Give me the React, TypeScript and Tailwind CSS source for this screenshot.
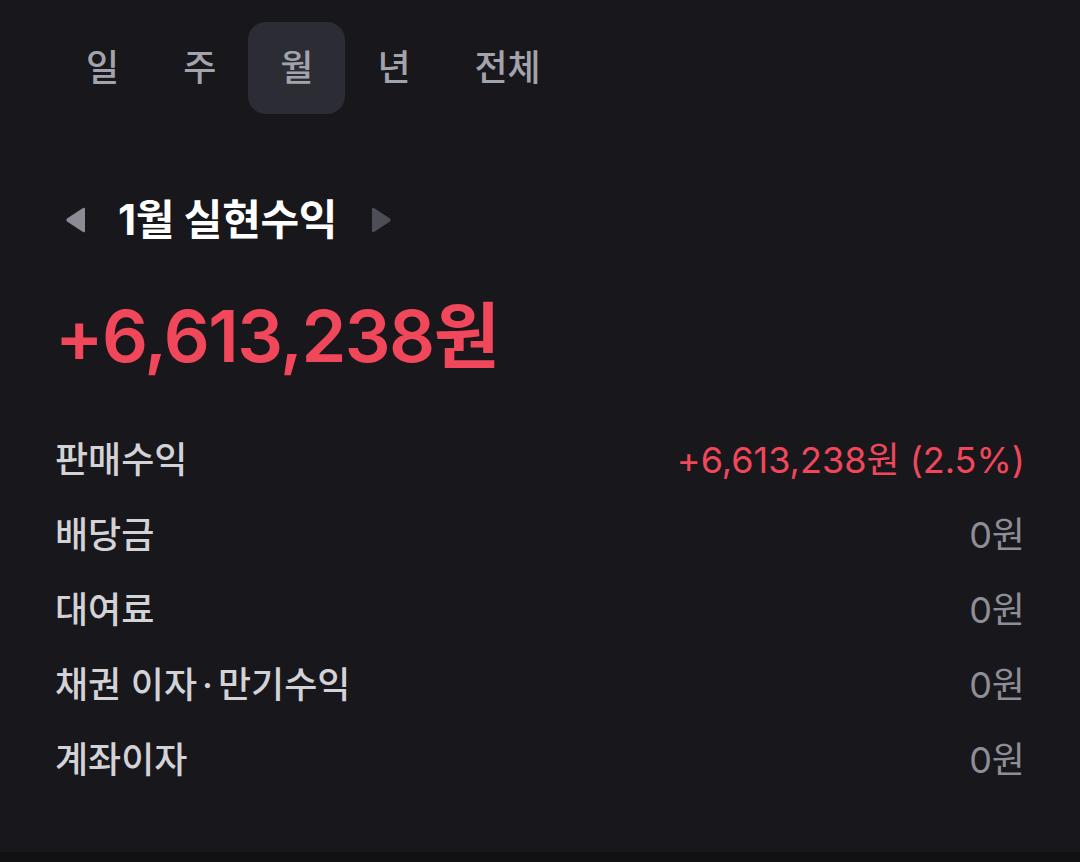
import React from "react";

const rows: { label: React.ReactNode; key: string; value: string; red?: boolean }[] = [
  { key: "a", label: "판매수익", value: "+6,613,238원 (2.5%)", red: true },
  { key: "b", label: "배당금", value: "0원" },
  { key: "c", label: "대여료", value: "0원" },
  {
    key: "d",
    label: (
      <>
        채권 이자<span className="mx-[5px]">·</span>만기수익
      </>
    ),
    value: "0원",
  },
  { key: "e", label: "계좌이자", value: "0원" },
];

const tabs = ["일", "주", "월", "년", "전체"];

export default function App() {
  return (
    <div
      className="w-[1080px] h-[862px] bg-[#18171c] flex flex-col overflow-hidden"
      style={{ fontFamily: 'Inter, "Noto Sans CJK KR", sans-serif' }}
    >
      <div className="flex-1 flex flex-col">
        <div className="flex pl-[54px] pt-[22px]">
          {tabs.map((t) => (
            <div
              key={t}
              className={`h-[92px] px-[32px] flex items-center justify-center rounded-[18px] text-[36px] font-medium text-[#a3a3ab] ${
                t === "월" ? "bg-[#2c2c35]" : ""
              }`}
            >
              {t}
            </div>
          ))}
        </div>

        <div className="flex items-center pl-[64px] mt-[84px] h-[44px]">
          <svg width="24" height="26" viewBox="0 0 24 26">
            <path d="M21 2 L21 24 Q21 26 19 25 L3 14.5 Q1.5 13 3 11.5 L19 1 Q21 0 21 2 Z" fill="#8c8c95" />
          </svg>
          <div className="ml-[30px] mr-[32px] text-[42px] font-bold text-white leading-none tracking-[-0.3px]">
            1월 실현수익
          </div>
          <svg width="24" height="26" viewBox="0 0 24 26">
            <path d="M3 2 L3 24 Q3 26 5 25 L21 14.5 Q22.5 13 21 11.5 L5 1 Q3 0 3 2 Z" fill="#4d4d58" />
          </svg>
        </div>

        <div className="pl-[55px] mt-[58px] text-[72px] font-semibold text-[#f0475b] leading-none tracking-[-1.5px]">
          +6,613,238원
        </div>

        <div className="flex flex-col px-[55px] mt-[50px]">
          {rows.map((r) => (
            <div key={r.key} className="flex items-center justify-between h-[75px]">
              <span className="text-[36px] text-[#d2d2d7] font-medium">{r.label}</span>
              <span className={`text-[36px] ${r.red ? "text-[#f0475b]" : "text-[#8e8e97]"}`}>
                {r.value}
              </span>
            </div>
          ))}
        </div>
      </div>
      <div className="h-[10px] bg-[#111113]" />
    </div>
  );
}
